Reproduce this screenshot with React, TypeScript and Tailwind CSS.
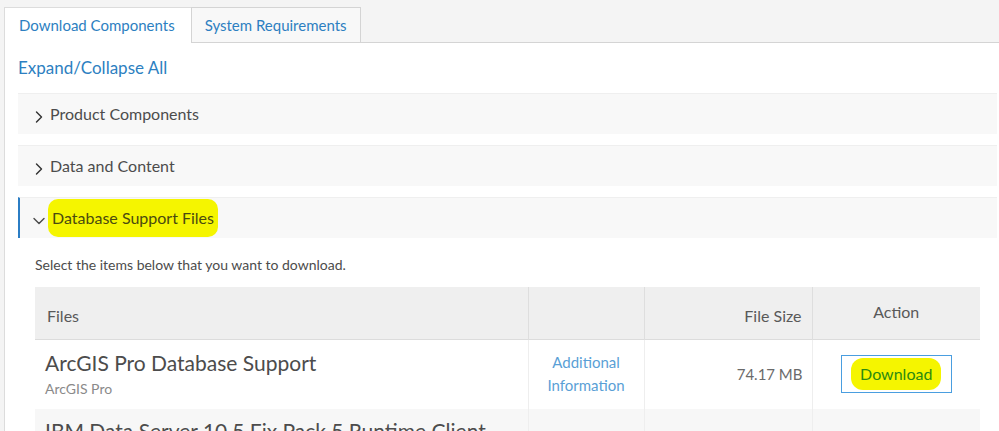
import { ChevronRight, ChevronDown } from "lucide-react";

const font = { fontFamily: "Lato, 'Open Sans', sans-serif" };

function AccordionRow({ title, open }: { title: string; open?: boolean }) {
  return (
    <div
      className={`flex items-center h-[41px] bg-[#f8f8f8] border-t border-[#efefef] ${
        open ? "border-l-2 border-l-[#2b7dc4] pl-[9px]" : "pl-[11px]"
      }`}
    >
      {open ? (
        <ChevronDown size={20} strokeWidth={1.7} className="text-[#4c4c4c] mt-[5px]" />
      ) : (
        <ChevronRight size={20} strokeWidth={1.7} className="text-[#333] mt-[6px]" />
      )}
      {open ? (
        <span className="ml-[-1px] px-[4px] h-[38px] flex items-center bg-[#f5f500] rounded-[10px] text-[16px] text-[#4a4a10]">
          {title}
        </span>
      ) : (
        <span className="ml-[1px] text-[16px] text-[#4c4c4c]">{title}</span>
      )}
    </div>
  );
}

export default function App() {
  return (
    <div className="w-[999px] h-[431px] overflow-hidden bg-[#f4f4f4]" style={font}>
      {/* tabs */}
      <div className="flex items-end pt-[7px] pl-[4px]">
        <div className="h-[36px] pl-[14px] pr-[16px] flex items-center bg-white border-l border-t border-[#dcdcdc] text-[15px] text-[#2d7fc1]">
          Download Components
        </div>
        <div className="h-[36px] px-[13px] flex items-center bg-[#f8f8f8] border border-[#d4d4d4] text-[15px] text-[#2d7fc1]">
          System Requirements
        </div>
        <div className="flex-1 border-b border-[#d4d4d4] h-[1px]" />
      </div>

      {/* panel */}
      <div className="ml-[4px] bg-white border-l border-[#dcdcdc] h-[400px] pl-[13px] pr-[2px]">
        <div className="pt-[12px] h-[50px] text-[17px] text-[#2d7fc1]">Expand/Collapse All</div>

        <div className="flex flex-col gap-[11px]">
          <AccordionRow title="Product Components" />
          <AccordionRow title="Data and Content" />
          <AccordionRow title="Database Support Files" open />
        </div>

        <div className="pl-[17px] pr-[18px]">
          <p className="pt-[18px] text-[14px] leading-[18px] text-[#4c4c4c]">Select the items below that you want to download.</p>

          <table className="mt-[13px] w-[945px] border-collapse table-fixed">
            <colgroup>
              <col className="w-[493px]" />
              <col className="w-[116px]" />
              <col className="w-[168px]" />
              <col className="w-[168px]" />
            </colgroup>
            <thead>
              <tr className="h-[52px] bg-[#efefef] border-b border-[#dcdcdc] text-[#595959]">
                <th className="text-left font-normal text-[16px] pl-[12px] pt-[6px]">Files</th>
                <th className="border-l border-[#dedede]" />
                <th className="border-l border-[#dedede] text-right font-normal text-[16px] pr-[10px] pt-[6px]">File Size</th>
                <th className="border-l border-[#dedede] text-center font-normal text-[16px] pb-[1px]">Action</th>
              </tr>
            </thead>
            <tbody>
              <tr className="h-[70px] bg-white">
                <td className="pl-[10px] align-middle">
                  <div className="text-[21px] leading-[26px] text-[#4c4c4c]">ArcGIS Pro Database Support</div>
                  <div className="mt-[3px] text-[14px] leading-[20px] text-[#8a8a8a]">ArcGIS Pro</div>
                </td>
                <td className="border-l border-[#eeeeee] text-center text-[15px] leading-[23px] text-[#5a9fd6]">
                  Additional
                  <br />
                  Information
                </td>
                <td className="border-l border-[#eeeeee] text-right text-[15px] text-[#6a6a6a] pr-[9px]">74.17 MB</td>
                <td className="border-l border-[#eeeeee] text-center">
                  <div className="inline-flex items-center justify-center w-[111px] h-[38px] border border-[#4a9ee0] bg-white">
                    <span className="px-[9px] h-[32px] flex items-center bg-[#f5f500] rounded-[12px] text-[16px] text-[#2c8a10]">
                      Download
                    </span>
                  </div>
                </td>
              </tr>
              <tr className="h-[60px] bg-[#f7f7f7]">
                <td className="pl-[10px] align-top pt-[9px]">
                  <div className="text-[21px] leading-[26px] text-[#4c4c4c] whitespace-nowrap">
                    IBM Data Server 10.5 Fix Pack 5 Runtime Client
                  </div>
                </td>
                <td className="border-l border-[#eeeeee]" />
                <td className="border-l border-[#eeeeee]" />
                <td className="border-l border-[#eeeeee]" />
              </tr>
            </tbody>
          </table>
        </div>
      </div>
    </div>
  );
}
